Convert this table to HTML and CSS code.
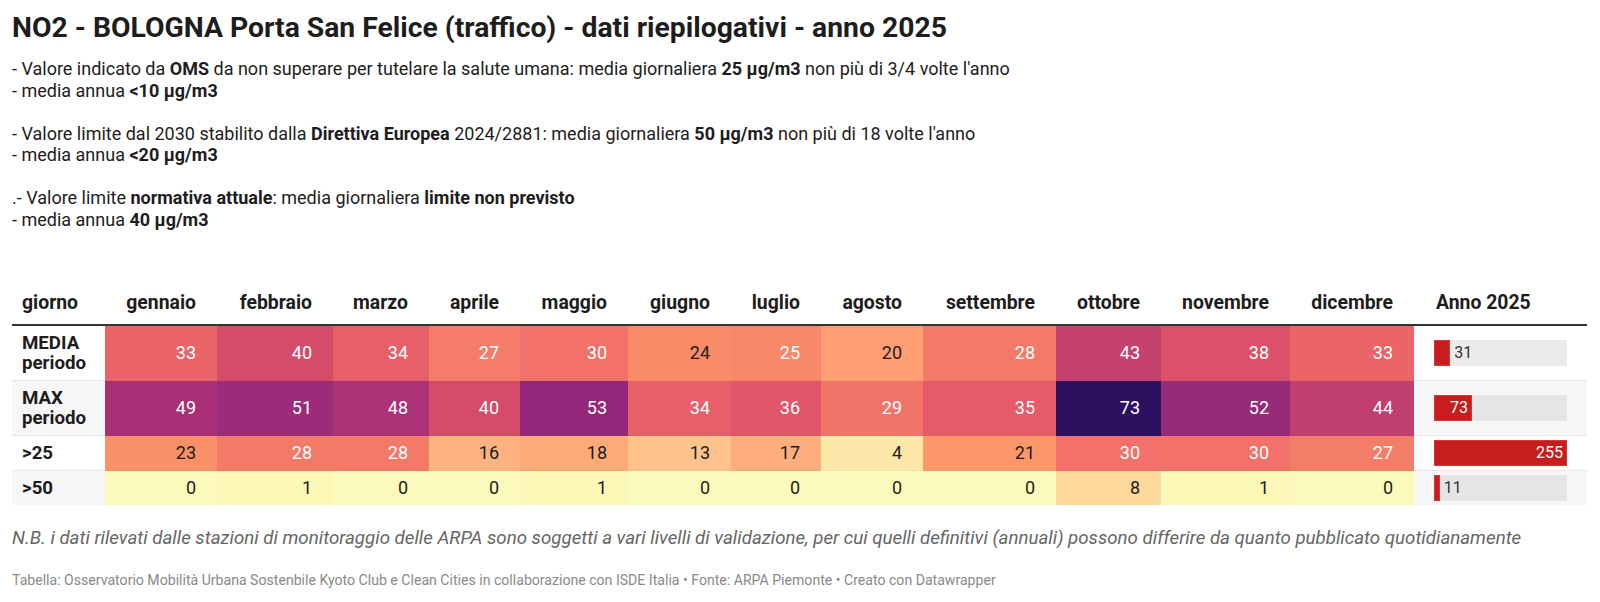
FILE: index.html
```html
<!DOCTYPE html>
<html lang="it">
<head>
<meta charset="utf-8">
<title>NO2 - BOLOGNA Porta San Felice</title>
<link rel="stylesheet" href="styles.css">
</head>
<body>
<div class="chart">
  <h1 class="title">NO2 - BOLOGNA Porta San Felice (traffico) - dati riepilogativi - anno 2025</h1>
  <div class="intro">
    <p>- Valore indicato da <b>OMS</b> da non superare per tutelare la salute umana: media giornaliera <b>25 µg/m3</b> non più di 3/4 volte l'anno<br>- media annua <b>&lt;10 µg/m3</b></p>
    <p>- Valore limite dal 2030 stabilito dalla <b>Direttiva Europea</b> 2024/2881: media giornaliera <b>50 µg/m3</b> non più di 18 volte l'anno<br>- media annua <b>&lt;20 µg/m3</b></p>
    <p>.- Valore limite <b>normativa attuale</b>: media giornaliera <b>limite non previsto</b><br>- media annua <b>40 µg/m3</b></p>
  </div>
  <table class="data">
    <colgroup>
      <col class="c-label"><col class="c-gen"><col class="c-feb"><col class="c-mar"><col class="c-apr"><col class="c-mag"><col class="c-giu"><col class="c-lug"><col class="c-ago"><col class="c-set"><col class="c-ott"><col class="c-nov"><col class="c-dic"><col class="c-anno">
    </colgroup>
    <thead>
      <tr>
        <th class="lbl">giorno</th>
        <th>gennaio</th><th>febbraio</th><th>marzo</th><th>aprile</th><th>maggio</th><th>giugno</th><th>luglio</th><th>agosto</th><th>settembre</th><th>ottobre</th><th>novembre</th><th>dicembre</th>
        <th class="anno">Anno 2025</th>
      </tr>
    </thead>
    <tbody>
      <tr>
        <td class="lbl">MEDIA<br>periodo</td>
        <td class="hm lt" style="background:#eb6467">33</td>
        <td class="hm lt" style="background:#d44c68">40</td>
        <td class="hm lt" style="background:#e75f69">34</td>
        <td class="hm lt" style="background:#f47c68">27</td>
        <td class="hm lt" style="background:#f2716a">30</td>
        <td class="hm dk" style="background:#f98b69">24</td>
        <td class="hm lt" style="background:#f88869">25</td>
        <td class="hm dk" style="background:#fe9e72">20</td>
        <td class="hm lt" style="background:#f47a68">28</td>
        <td class="hm lt" style="background:#c5416f">43</td>
        <td class="hm lt" style="background:#db5169">38</td>
        <td class="hm lt" style="background:#ea6468">33</td>
        <td class="bar-cell"><div class="track"><div class="bar" style="width:12.16%"></div><span class="val">31</span></div></td>
      </tr>
      <tr class="even">
        <td class="lbl">MAX<br>periodo</td>
        <td class="hm lt" style="background:#a92f77">49</td>
        <td class="hm lt" style="background:#9c2b79">51</td>
        <td class="hm lt" style="background:#ac3277">48</td>
        <td class="hm lt" style="background:#d44c68">40</td>
        <td class="hm lt" style="background:#93287a">53</td>
        <td class="hm lt" style="background:#e75f69">34</td>
        <td class="hm lt" style="background:#e25669">36</td>
        <td class="hm lt" style="background:#f07568">29</td>
        <td class="hm lt" style="background:#e55b69">35</td>
        <td class="hm lt" style="background:#2c115f">73</td>
        <td class="hm lt" style="background:#982a7a">52</td>
        <td class="hm lt" style="background:#c13e70">44</td>
        <td class="bar-cell"><div class="track"><div class="bar" style="width:28.63%"><span class="val in">73</span></div></div></td>
      </tr>
      <tr>
        <td class="lbl">&gt;25</td>
        <td class="hm dk" style="background:#fa9068">23</td>
        <td class="hm lt" style="background:#f47a68">28</td>
        <td class="hm lt" style="background:#f47a68">28</td>
        <td class="hm dk" style="background:#feb27f">16</td>
        <td class="hm dk" style="background:#fdaa79">18</td>
        <td class="hm dk" style="background:#fec38b">13</td>
        <td class="hm dk" style="background:#feae7c">17</td>
        <td class="hm dk" style="background:#fde8aa">4</td>
        <td class="hm dk" style="background:#fb9769">21</td>
        <td class="hm lt" style="background:#f2716a">30</td>
        <td class="hm lt" style="background:#f2716a">30</td>
        <td class="hm lt" style="background:#f47d67">27</td>
        <td class="bar-cell"><div class="track"><div class="bar" style="width:100%"><span class="val in">255</span></div></div></td>
      </tr>
      <tr class="even last">
        <td class="lbl">&gt;50</td>
        <td class="hm dk" style="background:#fcfabb">0</td>
        <td class="hm dk" style="background:#fcf6b7">1</td>
        <td class="hm dk" style="background:#fcfabb">0</td>
        <td class="hm dk" style="background:#fcfabb">0</td>
        <td class="hm dk" style="background:#fcf6b7">1</td>
        <td class="hm dk" style="background:#fcfabb">0</td>
        <td class="hm dk" style="background:#fcfabb">0</td>
        <td class="hm dk" style="background:#fcfabb">0</td>
        <td class="hm dk" style="background:#fcfabb">0</td>
        <td class="hm dk" style="background:#fed79b">8</td>
        <td class="hm dk" style="background:#fcf6b7">1</td>
        <td class="hm dk" style="background:#fcfabb">0</td>
        <td class="bar-cell"><div class="track"><div class="bar" style="width:4.31%"></div><span class="val">11</span></div></td>
      </tr>
    </tbody>
  </table>
  <p class="note">N.B. i dati rilevati dalle stazioni di monitoraggio delle ARPA sono soggetti a vari livelli di validazione, per cui quelli definitivi (annuali) possono differire da quanto pubblicato quotidianamente</p>
  <p class="footer">Tabella: Osservatorio Mobilità Urbana Sostenbile Kyoto Club e Clean Cities in collaborazione con ISDE Italia • Fonte: ARPA Piemonte • Creato con Datawrapper</p>
</div>
</body>
</html>
```
FILE: styles.css
```css
html, body {
  margin: 0;
  padding: 0;
  background: #ffffff;
}
body {
  font-family: Roboto, "Liberation Sans", Arial, sans-serif;
  color: #1d1d1d;
}
.chart {
  padding: 12px 13px 0 12px;
}
.title {
  margin: 0;
  font-size: 28.3px;
  line-height: 32px;
  font-weight: 700;
  color: #1d1d1d;
}
.intro {
  margin-top: 14px;
  font-size: 18px;
  line-height: 21.5px;
  color: #1d1d1d;
}
.intro p {
  margin: 0 0 21.5px 0;
}
.intro p:last-child {
  margin-bottom: 0;
}
.intro b {
  font-weight: 700;
}
.data {
  margin-top: 52px;
  width: 1575px;
  border-collapse: collapse;
  table-layout: fixed;
  font-size: 18px;
}
.c-label { width: 93px; }
.c-gen { width: 112px; }
.c-feb { width: 116px; }
.c-mar { width: 96px; }
.c-apr { width: 91px; }
.c-mag { width: 108px; }
.c-giu { width: 103px; }
.c-lug { width: 90px; }
.c-ago { width: 102px; }
.c-set { width: 133px; }
.c-ott { width: 105px; }
.c-nov { width: 129px; }
.c-dic { width: 124px; }
.c-anno { width: 173px; }

.data th {
  font-size: 19.4px;
  font-weight: 700;
  line-height: 20px;
  text-align: right;
  padding: 11px 21px 11px 0;
  border-bottom: 2px solid #333333;
  color: #1d1d1d;
  white-space: nowrap;
}
.data th.lbl {
  text-align: left;
  padding-left: 10px;
  padding-right: 0;
}
.data th.anno {
  text-align: left;
  padding-left: 22px;
  padding-right: 0;
}
.data td {
  line-height: 20px;
  padding: 7px 21px 7px 0;
  border-bottom: 1px solid #e6e6e6;
  vertical-align: middle;
  text-align: right;
}
.data tr.even td {
  background: #f7f7f7;
}
.data tr.last td {
  border-bottom: none;
}
.data td.lbl {
  text-align: left;
  font-weight: 700;
  font-size: 18.7px;
  padding-left: 10px;
  padding-right: 0;
}
.data td.hm {
  border-bottom-color: rgba(0, 0, 0, 0.02);
}
.data td.lt {
  color: #ffffff;
}
.data td.dk {
  color: #1d1d1d;
}
.data td.bar-cell {
  padding: 0 20px;
  text-align: left;
}
.track {
  display: flex;
  align-items: center;
  height: 26px;
  background: #ebebeb;
}
tr.even .track {
  background: #e5e5e5;
}
.bar {
  height: 26px;
  background: #c71e1d;
  box-shadow: inset 0 0 0 1px #d03a3a;
  display: flex;
  align-items: center;
  justify-content: flex-end;
  box-sizing: border-box;
}
.val {
  font-size: 16px;
  line-height: 26px;
  color: #333333;
  padding-left: 4px;
}
.val.in {
  color: #ffffff;
  padding-left: 0;
  padding-right: 4px;
}
.note {
  margin: 23px 0 0 0;
  font-size: 18.7px;
  line-height: 20px;
  font-style: italic;
  color: #666666;
}
.footer {
  margin: 22px 0 0 0;
  font-size: 14.1px;
  line-height: 20px;
  color: #8a8a8a;
}
```
